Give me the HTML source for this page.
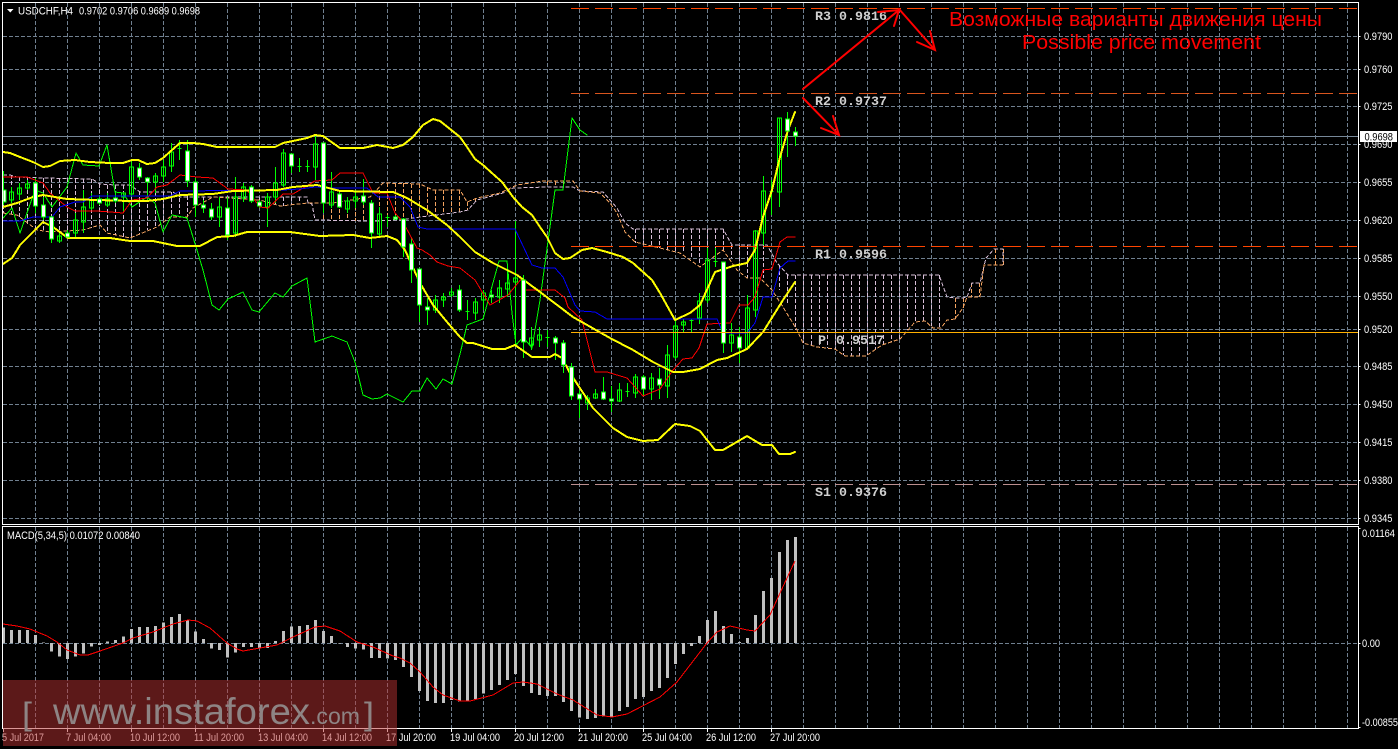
<!DOCTYPE html>
<html>
<head>
<meta charset="utf-8">
<style>
html,body{margin:0;padding:0;background:#000;width:1398px;height:749px;overflow:hidden}
svg{display:block;position:absolute;left:0;top:0}
text{font-family:"Liberation Sans",sans-serif}
.ax{font-size:11px;fill:#fff}
.lv{font-family:"Liberation Mono",monospace;font-size:13.33px;font-weight:bold;fill:#d0d0d0}
</style>
</head>
<body>
<svg width="1398" height="749" viewBox="0 0 1398 749" xmlns="http://www.w3.org/2000/svg">
<rect width="1398" height="749" fill="#000"/>

<!-- grid -->
<g stroke="#708090" stroke-width="1" stroke-dasharray="4 2" shape-rendering="crispEdges" fill="none">
<path d="M3 36.5H1358M3 69.5H1358M3 106.5H1358M3 144.5H1358M3 182.5H1358M3 220.5H1358M3 258.5H1358M3 296.5H1358M3 329.5H1358M3 366.5H1358M3 404.5H1358M3 442.5H1358M3 480.5H1358M3 518.5H1358M3 643.5H1358"/>
<path d="M35.5 3V524M67.5 3V524M99.5 3V524M131.5 3V524M163.5 3V524M195.5 3V524M227.5 3V524M259.5 3V524M291.5 3V524M323.5 3V524M355.5 3V524M387.5 3V524M419.5 3V524M451.5 3V524M483.5 3V524M515.5 3V524M547.5 3V524M579.5 3V524M611.5 3V524M643.5 3V524M675.5 3V524M707.5 3V524M739.5 3V524M771.5 3V524M803.5 3V524M835.5 3V524M867.5 3V524M899.5 3V524M931.5 3V524M963.5 3V524M995.5 3V524M1027.5 3V524M1059.5 3V524M1091.5 3V524M1123.5 3V524M1155.5 3V524M1187.5 3V524M1219.5 3V524M1251.5 3V524M1283.5 3V524M1315.5 3V524M1347.5 3V524"/>
<path d="M35.5 527V728M67.5 527V728M99.5 527V728M131.5 527V728M163.5 527V728M195.5 527V728M227.5 527V728M259.5 527V728M291.5 527V728M323.5 527V728M355.5 527V728M387.5 527V728M419.5 527V728M451.5 527V728M483.5 527V728M515.5 527V728M547.5 527V728M579.5 527V728M611.5 527V728M643.5 527V728M675.5 527V728M707.5 527V728M739.5 527V728M771.5 527V728M803.5 527V728M835.5 527V728M867.5 527V728M899.5 527V728M931.5 527V728M963.5 527V728M995.5 527V728M1027.5 527V728M1059.5 527V728M1091.5 527V728M1123.5 527V728M1155.5 527V728M1187.5 527V728M1219.5 527V728M1251.5 527V728M1283.5 527V728M1315.5 527V728M1347.5 527V728"/>
</g>

<!-- current price line -->
<path d="M3 136.5H1358" stroke="#778899" stroke-width="1" shape-rendering="crispEdges"/>

<!-- cloud hatches -->
<g fill="none" stroke-width="1" stroke-dasharray="4 2" shape-rendering="crispEdges">
<path stroke="#d8bfd8" d="M3.5 175V213M11.5 175V214M19.5 177V218M27.5 178V224M35.5 178V230M43.5 178V231M51.5 178V232M59.5 178V232M67.5 178V231M75.5 179V231M83.5 179V230M91.5 179V228M99.5 184V225M107.5 185V233M115.5 185V235M123.5 185V237M131.5 185V238M139.5 191V234M147.5 192V230M155.5 192V228M163.5 192V222M171.5 192V217M179.5 192V217M187.5 196V217M195.5 197V207M203.5 197V202M259.5 197V200M267.5 197V203M275.5 197V205M283.5 197V206M291.5 197V205M299.5 197V203M635.5 229V243M643.5 229V245M651.5 229V247M659.5 229V248M667.5 229V250M675.5 229V251M683.5 229V253M691.5 229V257M699.5 229V265M707.5 229V262M715.5 229V255M723.5 229V250M731.5 245V258M739.5 245V270M747.5 245V278M755.5 245V278M763.5 245V278M779.5 265V290M787.5 275V303M795.5 275V330M803.5 275V343M811.5 275V345M819.5 275V347M827.5 275V348M835.5 275V349M843.5 275V355M851.5 275V356M859.5 275V356M867.5 275V355M875.5 275V350M883.5 275V345M891.5 275V342M899.5 275V339M907.5 275V330M915.5 275V322M923.5 275V321M931.5 275V326M939.5 275V328"/>
<path stroke="#f4a460" d="M323.5 203V221M331.5 203V221M339.5 203V221M347.5 202V221M355.5 200V221M363.5 198V221M379.5 190V221M387.5 183V220M395.5 183V220M403.5 183V219M411.5 184V218M419.5 184V217M427.5 187V216M435.5 190V215M443.5 190V214M451.5 190V213M459.5 190V212M467.5 202V210M475.5 198V202M547.5 181V187M555.5 181V187M563.5 181V187M955.5 298V319M963.5 298V308M971.5 283V297M979.5 283V297M995.5 249V265M1003.5 249V265"/>
</g>

<!-- span B / span A -->
<g fill="none" stroke-width="1" stroke-dasharray="4 2" stroke-linejoin="round" shape-rendering="crispEdges">
<polyline stroke="#d8bfd8" points="3,175 10,175 17,177 43,178 92,179 100,184 115,185 130,185 140,192 173,192 180,197 217,197 307,197 308,203 312,204 315,220 372,221 400,220 420,217 460,212 468,210 477,200 503,193 513,188 547,187 573,187 580,191 603,192 617,208 625,223 633,229 723,229 732,245 767,245 777,263 788,275 939,275 947,297 955,298 963,298 967,297 972,283 980,283 986,258 994,249 1003,249 1003,265"/>
<polyline stroke="#f4a460" points="3,213 17,215 37,230 50,232 83,230 100,225 107,233 130,238 157,227 170,217 187,217 193,208 213,197 260,200 280,206 308,203 333,203 370,197 383,183 420,184 433,190 460,190 467,202 477,198 500,193 517,185 543,181 573,181 580,191 600,193 610,203 617,213 625,232 635,242 660,248 680,253 700,267 723,250 737,270 747,278 760,278 772,290 783,307 797,330 803,343 817,347 835,349 845,356 866,356 882,345 900,339 915,322 925,321 933,328 941,328 947,320 955,319 963,308 967,297 980,297 984,265 1003,265"/>
</g>

<!-- candles: wicks + bullish outlines -->
<path fill="none" stroke="#00ff00" stroke-width="1" shape-rendering="crispEdges" d="M3.5 171V205M11.5 187V203M19.5 183V200M27.5 180V190M35.5 178V213M43.5 197V220M51.5 216V243M59.5 233V243M67.5 230V238M75.5 213V237M83.5 190V233M91.5 193V210M99.5 195V205M107.5 193V207M115.5 192V203M123.5 192V213M131.5 160V197M139.5 163V180M147.5 177V200M155.5 173V193M163.5 160V182M171.5 143V172M179.5 140V160M187.5 140V187M195.5 178V217M203.5 200V213M211.5 203V220M219.5 197V227M227.5 197V240M235.5 177V237M243.5 183V202M251.5 185V203M259.5 200V208M267.5 193V227M275.5 167V203M283.5 149V187M291.5 153V173M299.5 158V172M307.5 160V172M315.5 135V180M323.5 143V213M331.5 172V208M339.5 190V208M347.5 197V213M355.5 190V208M363.5 179V205M371.5 200V248M379.5 207V237M387.5 215V227M395.5 215V220M403.5 218V257M411.5 237V283M419.5 269V322M427.5 298V325M435.5 295V313M443.5 293V307M451.5 288V297M459.5 285V312M467.5 300V320M475.5 298V320M483.5 290V310M491.5 290V303M499.5 280V303M507.5 270V297M515.5 221V345M523.5 275V358M531.5 327V350M539.5 327V347M547.5 330V347M555.5 336V360M563.5 340V373M571.5 363V400M579.5 390V418M587.5 395V410M595.5 389V399M603.5 377V400M611.5 386V412M619.5 383V402M627.5 383V397M635.5 374V398M643.5 375V396M651.5 373V400M659.5 368V399M667.5 345V398M675.5 320V359M683.5 319V332M691.5 319V332M699.5 293V324M707.5 248V303M715.5 248V267M723.5 262V353M731.5 323V352M739.5 327V363M747.5 295V350M755.5 230V317M763.5 176V245M771.5 180V215M779.5 118V207M787.5 112V157M795.5 127V146"/>
<path fill="none" stroke="#00ff00" stroke-width="1" shape-rendering="crispEdges" d="M9.5 192h4v8h-4zM17.5 188h4v6h-4zM25.5 184h4v4h-4zM57.5 236h4v5h-4zM73.5 220h4v13h-4zM81.5 207h4v15h-4zM89.5 200h4v8h-4zM105.5 199h4v6h-4zM121.5 193h4v4h-4zM129.5 167h4v27h-4zM153.5 176h4v6h-4zM161.5 167h4v9h-4zM169.5 152h4v14h-4zM217.5 207h4v10h-4zM233.5 197h4v36h-4zM241.5 187h4v11h-4zM265.5 197h4v10h-4zM273.5 183h4v14h-4zM281.5 153h4v32h-4zM313.5 144h4v23h-4zM329.5 192h4v13h-4zM345.5 201h4v8h-4zM353.5 197h4v4h-4zM377.5 214h4v20h-4zM433.5 300h4v10h-4zM441.5 297h4v3h-4zM449.5 292h4v3h-4zM473.5 302h4v11h-4zM481.5 293h4v7h-4zM497.5 288h4v9h-4zM505.5 283h4v6h-4zM513.5 278h4v4h-4zM529.5 338h4v7h-4zM537.5 335h4v5h-4zM585.5 398h4v5h-4zM593.5 394h4v4h-4zM617.5 390h4v11h-4zM633.5 377h4v16h-4zM649.5 378h4v11h-4zM665.5 355h4v31h-4zM673.5 326h4v31h-4zM681.5 322h4v3h-4zM697.5 301h4v17h-4zM705.5 260h4v40h-4zM729.5 335h4v8h-4zM745.5 308h4v40h-4zM753.5 231h4v79h-4zM761.5 191h4v42h-4zM777.5 118h4v74h-4zM177.5 148.5h4M297.5 166.5h4M305.5 166.5h4M385.5 217.5h4M465.5 311.5h4M545.5 337.5h4M625.5 391.5h4M689.5 320.5h4M713.5 261.5h4M769.5 191.5h4"/>

<!-- indicator lines -->
<g fill="none" stroke-linejoin="round" stroke-linecap="round" shape-rendering="crispEdges">
<polyline stroke="#00ff00" stroke-width="1" points="3,218 12,208 20,233 35,190 43,193 52,207 67,187 76,153 83,165 99,166 107,145 115,192 123,193 132,207 147,197 155,203 163,232 172,215 187,218 197,250 203,270 212,305 219,310 228,299 243,292 252,310 259,312 275,293 283,297 292,286 307,278 315,342 332,336 347,342 355,362 363,395 372,399 380,398 387,394 403,402 412,391 420,391 427,378 436,389 443,379 452,384 460,354 467,325 483,319 499,261 507,261 512,313 516,345 523,337 532,348 540,300 555,190 563,190 572,118 580,130 587,135"/>
<polyline stroke="#ff0000" stroke-width="1" points="3,177 27,177 43,183 50,193 67,207 75,211 97,211 123,213 132,200 147,198 157,187 167,185 180,175 197,177 213,178 228,189 247,190 260,207 268,208 283,194 293,194 315,181 332,180 340,173 363,173 373,193 387,193 395,213 403,222 417,248 422,250 430,255 437,262 448,266 460,268 475,280 490,305 508,295 522,278 523,290 555,290 565,298 568,307 582,320 595,372 607,372 627,378 643,396 660,389 673,370 683,359 692,358 699,348 707,324 730,323 739,305 748,305 755,297 763,270 772,269 780,242 787,237 795,237"/>
<polyline stroke="#0000ff" stroke-width="1" points="3,221 20,221 33,217 52,217 60,207 75,202 83,202 92,196 170,196 180,191 283,190 300,189 315,187 333,188 367,188 378,197 400,197 410,207 418,227 427,229 515,229 532,265 542,268 555,268 563,277 575,305 580,311 595,312 607,319 717,319 723,333 747,333 755,323 763,297 772,297 780,268 788,261 795,261"/>
<g stroke="#ffff00" stroke-width="2">
<polyline points="3,152 10,153 20,157 33,162 43,167 50,166 60,161 75,160 90,162 110,163 123,163 132,160 138,160 147,164 155,163 163,158 172,150 180,143 193,143 203,144 217,147 275,147 283,143 293,141 307,138 315,135 323,136 340,148 363,148 377,145 393,148 403,145 413,137 423,125 433,119 440,121 460,137 467,147 475,159 483,165 493,174 502,182 513,197 522,207 532,215 540,227 547,237 555,253 563,259 570,258 582,250 592,248 607,252 623,257 633,263 652,280 660,293 675,320 690,313 700,305 710,283 715,272 733,266 747,263 755,250 763,217 772,190 780,157 788,130 795,112"/>
<polyline points="3,207 17,203 33,197 43,195 67,199 97,200 130,201 147,201 163,199 180,195 213,194 233,191 277,190 293,187 317,185 340,191 393,192 407,198 427,210 447,225 460,237 475,252 493,263 517,275 540,292 573,317 610,338 633,350 653,362 673,372 683,372 700,369 717,360 727,358 747,349 763,332 783,300 795,282"/>
<polyline points="3,264 12,258 17,250 20,245 43,222 53,227 68,238 110,238 130,241 153,241 177,246 200,246 217,237 233,236 247,232 290,232 320,236 353,235 370,238 387,236 397,240 405,250 420,283 433,305 447,322 460,337 467,343 473,343 492,349 505,349 515,345 532,357 550,357 555,354 562,358 570,373 593,408 613,428 627,437 643,441 658,440 675,424 690,426 700,431 715,450 723,450 747,436 762,445 772,445 779,454 790,454 795,452"/>
</g>
</g>

<!-- bearish white bodies -->
<path fill="#fff" stroke="#00ff00" stroke-width="1" shape-rendering="crispEdges" d="M3 190h3v12h-3zM33.5 183h4v23h-4zM41.5 205h4v12h-4zM49.5 217h4v22h-4zM65.5 233h4v4h-4zM97.5 199h4v4h-4zM113.5 198h4v3h-4zM137.5 168h4v9h-4zM145.5 178h4v4h-4zM185.5 151h4v30h-4zM193.5 182h4v23h-4zM201.5 205h4v3h-4zM209.5 209h4v8h-4zM225.5 208h4v27h-4zM249.5 187h4v14h-4zM257.5 202h4v4h-4zM289.5 154h4v12h-4zM321.5 143h4v60h-4zM337.5 194h4v13h-4zM361.5 196h4v6h-4zM369.5 203h4v30h-4zM393.5 217h4v2h-4zM401.5 219h4v28h-4zM409.5 244h4v26h-4zM417.5 269h4v36h-4zM425.5 307h4v3h-4zM457.5 290h4v20h-4zM489.5 295h4v2h-4zM521.5 280h4v62h-4zM553.5 338h4v5h-4zM561.5 343h4v22h-4zM569.5 367h4v29h-4zM577.5 394h4v5h-4zM601.5 392h4v7h-4zM609.5 399h4v2h-4zM641.5 377h4v12h-4zM657.5 379h4v6h-4zM721.5 262h4v81h-4zM737.5 337h4v11h-4zM785.5 119h4v12h-4zM793.5 132h4v4h-4z"/>

<!-- pivot levels -->
<g fill="none" stroke-width="1" shape-rendering="crispEdges">
<path d="M571 8.5H1358" stroke="#ff4500" stroke-dasharray="18 6"/>
<path d="M571 93.5H1358" stroke="#d9551e" stroke-dasharray="18 6"/>
<path d="M571 246.5H1358" stroke="#ff4500" stroke-dasharray="18 6"/>
<path d="M571 332.5H1358" stroke="#ffb000"/>
<path d="M571 484.5H1358" stroke="#bc8f8f" stroke-dasharray="18 6"/>
</g>
<text class="lv" x="815" y="20" textLength="72" lengthAdjust="spacing">R3 0.9816</text>
<text class="lv" x="815" y="105" textLength="72" lengthAdjust="spacing">R2 0.9737</text>
<text class="lv" x="815" y="258" textLength="72" lengthAdjust="spacing">R1 0.9596</text>
<text class="lv" x="818" y="344">P</text>
<text class="lv" x="836" y="344" textLength="48" lengthAdjust="spacing">0.9517</text>
<text class="lv" x="815" y="496" textLength="72" lengthAdjust="spacing">S1 0.9376</text>

<!-- red arrows -->
<g fill="none" stroke="#ff0000" stroke-width="2" stroke-linecap="round" stroke-linejoin="miter">
<path d="M803 89L899 10M878 12L899 10L894 26"/>
<path d="M899 9L935 50M930 31L935 50L917 42"/>
<path d="M803 98L839 135M833 116L839 135L821 128"/>
</g>
<text x="949" y="26" font-size="20.5" fill="#ff0000" textLength="373" lengthAdjust="spacingAndGlyphs">Возможные варианты движения цены</text>
<text x="1022" y="49" font-size="20.5" fill="#ff0000" textLength="239" lengthAdjust="spacingAndGlyphs">Possible price movement</text>

<!-- MACD -->
<path fill="none" stroke="#c0c0c0" stroke-width="3" shape-rendering="crispEdges" d="M3.5 643V627.7M11.5 643V630M19.5 643V630M27.5 643V630M35.5 643V635M43.5 643V642.3M51.5 643V651.7M59.5 643V656.7M67.5 643V659M75.5 643V656.7M83.5 643V653.3M91.5 643V646.7M99.5 643V645M107.5 643V641.7M115.5 643V640M123.5 643V636.7M131.5 643V629M139.5 643V627M147.5 643V627M155.5 643V626M163.5 643V622.7M171.5 643V617M179.5 643V614M187.5 643V620M195.5 643V631.7M203.5 643V639M211.5 643V648.3M219.5 643V650M227.5 643V657.3M235.5 643V652.7M243.5 643V647M251.5 643V647M259.5 643V648.3M267.5 643V648M275.5 643V641M283.5 643V631M291.5 643V626.7M299.5 643V626M307.5 643V625M315.5 643V620M323.5 643V631M331.5 643V636M339.5 643V643.7M347.5 643V647M355.5 643V648.3M363.5 643V649.3M371.5 643V658M379.5 643V658M387.5 643V658.7M395.5 643V660M403.5 643V667M411.5 643V677M419.5 643V691M427.5 643V701M435.5 643V703M443.5 643V703M451.5 643V700M459.5 643V701.3M467.5 643V701.3M475.5 643V699M483.5 643V693.3M491.5 643V690M499.5 643V685M507.5 643V680M515.5 643V674M523.5 643V686M531.5 643V693M539.5 643V695M547.5 643V696M555.5 643V696M563.5 643V702M571.5 643V711M579.5 643V717.3M587.5 643V719M595.5 643V718M603.5 643V716.7M611.5 643V716.3M619.5 643V711M627.5 643V707M635.5 643V699M643.5 643V697M651.5 643V691M659.5 643V688M667.5 643V678M675.5 643V664M683.5 643V654M691.5 643V646M699.5 643V636M707.5 643V620M715.5 643V611M723.5 643V626M731.5 643V634M739.5 643V642M747.5 643V638M755.5 643V615M763.5 643V591M771.5 643V578M779.5 643V552M787.5 643V540M795.5 643V537"/>
<polyline fill="none" stroke="#ff0000" stroke-width="1" stroke-linejoin="round" shape-rendering="crispEdges" points="3,624 17,626 30,629 47,636 57,642 67,650 80,655 88,655 100,651 123,643 133,638 153,632 173,624 188,620 197,621 210,628 227,643 237,649 243,651 260,648 277,645 293,637 315,627 325,626 340,631 357,642 373,647 393,656 400,658 410,663 420,672 433,687 443,695 460,701 470,701 493,695 513,683 523,682 537,684 557,694 573,700 597,715 612,717 627,714 660,697 677,682 707,643 717,632 730,626 747,630 755,631 770,615 780,593 795,561"/>

<!-- frames -->
<g fill="none" stroke="#fff" stroke-width="1" shape-rendering="crispEdges">
<path d="M2.5 2.5H1358.5V524.5H2.5Z"/>
<path d="M2.5 526.5H1358.5V728.5H2.5Z"/>
<path d="M1358.5 36.5h2M1358.5 69.5h2M1358.5 106.5h2M1358.5 144.5h2M1358.5 182.5h2M1358.5 220.5h2M1358.5 258.5h2M1358.5 296.5h2M1358.5 329.5h2M1358.5 366.5h2M1358.5 404.5h2M1358.5 442.5h2M1358.5 480.5h2M1358.5 518.5h2M1358.5 528.5h2M1358.5 643.5h2M1358.5 727.5h2"/>
<path d="M3.5 729v3M67.5 729v3M131.5 729v3M195.5 729v3M259.5 729v3M323.5 729v3M387.5 729v3M451.5 729v3M515.5 729v3M579.5 729v3M643.5 729v3M707.5 729v3M771.5 729v3"/>
</g>

<!-- header -->
<path d="M7 9h6.5l-3.2 3.5z" fill="#fff"/>
<text x="18" y="14.5" font-size="11" fill="#fff" textLength="55" lengthAdjust="spacingAndGlyphs">USDCHF,H4</text>
<text x="79" y="14.5" font-size="11" fill="#fff" textLength="121" lengthAdjust="spacingAndGlyphs">0.9702 0.9706 0.9689 0.9698</text>
<text x="7" y="539" font-size="11" fill="#fff" textLength="133" lengthAdjust="spacingAndGlyphs">MACD(5,34,5) 0.01072 0.00840</text>

<!-- price axis -->
<g>
<text class="ax" x="1364" y="40" textLength="28.5" lengthAdjust="spacingAndGlyphs">0.9790</text>
<text class="ax" x="1364" y="73" textLength="28.5" lengthAdjust="spacingAndGlyphs">0.9760</text>
<text class="ax" x="1364" y="110" textLength="28.5" lengthAdjust="spacingAndGlyphs">0.9725</text>
<text class="ax" x="1364" y="148" textLength="28.5" lengthAdjust="spacingAndGlyphs">0.9690</text>
<text class="ax" x="1364" y="186" textLength="28.5" lengthAdjust="spacingAndGlyphs">0.9655</text>
<text class="ax" x="1364" y="224" textLength="28.5" lengthAdjust="spacingAndGlyphs">0.9620</text>
<text class="ax" x="1364" y="262" textLength="28.5" lengthAdjust="spacingAndGlyphs">0.9585</text>
<text class="ax" x="1364" y="300" textLength="28.5" lengthAdjust="spacingAndGlyphs">0.9550</text>
<text class="ax" x="1364" y="333" textLength="28.5" lengthAdjust="spacingAndGlyphs">0.9520</text>
<text class="ax" x="1364" y="370" textLength="28.5" lengthAdjust="spacingAndGlyphs">0.9485</text>
<text class="ax" x="1364" y="408" textLength="28.5" lengthAdjust="spacingAndGlyphs">0.9450</text>
<text class="ax" x="1364" y="446" textLength="28.5" lengthAdjust="spacingAndGlyphs">0.9415</text>
<text class="ax" x="1364" y="484" textLength="28.5" lengthAdjust="spacingAndGlyphs">0.9380</text>
<text class="ax" x="1364" y="522" textLength="28.5" lengthAdjust="spacingAndGlyphs">0.9345</text>
<text class="ax" x="1362" y="537" textLength="33" lengthAdjust="spacingAndGlyphs">0.01164</text>
<text class="ax" x="1362" y="647" textLength="18" lengthAdjust="spacingAndGlyphs">0.00</text>
<text class="ax" x="1362" y="726" textLength="36" lengthAdjust="spacingAndGlyphs">-0.00855</text>
</g>
<rect x="1360" y="131" width="37" height="11" fill="#fff"/>
<text x="1364.5" y="140.5" font-size="11" fill="#000" textLength="28.5" lengthAdjust="spacingAndGlyphs">0.9698</text>

<!-- date axis -->
<g>
<text class="ax" x="2" y="741" textLength="42" lengthAdjust="spacingAndGlyphs">5 Jul 2017</text>
<text class="ax" x="66" y="741" textLength="45" lengthAdjust="spacingAndGlyphs">7 Jul 04:00</text>
<text class="ax" x="130" y="741" textLength="50" lengthAdjust="spacingAndGlyphs">10 Jul 12:00</text>
<text class="ax" x="194" y="741" textLength="50" lengthAdjust="spacingAndGlyphs">11 Jul 20:00</text>
<text class="ax" x="258" y="741" textLength="50" lengthAdjust="spacingAndGlyphs">13 Jul 04:00</text>
<text class="ax" x="322" y="741" textLength="50" lengthAdjust="spacingAndGlyphs">14 Jul 12:00</text>
<text class="ax" x="386" y="741" textLength="50" lengthAdjust="spacingAndGlyphs">17 Jul 20:00</text>
<text class="ax" x="450" y="741" textLength="50" lengthAdjust="spacingAndGlyphs">19 Jul 04:00</text>
<text class="ax" x="514" y="741" textLength="50" lengthAdjust="spacingAndGlyphs">20 Jul 12:00</text>
<text class="ax" x="578" y="741" textLength="50" lengthAdjust="spacingAndGlyphs">21 Jul 20:00</text>
<text class="ax" x="642" y="741" textLength="50" lengthAdjust="spacingAndGlyphs">25 Jul 04:00</text>
<text class="ax" x="706" y="741" textLength="50" lengthAdjust="spacingAndGlyphs">26 Jul 12:00</text>
<text class="ax" x="770" y="741" textLength="50" lengthAdjust="spacingAndGlyphs">27 Jul 20:00</text>
</g>

<!-- watermark -->
<rect x="3" y="680" width="394" height="66" fill="#b83232" fill-opacity="0.5"/>
<g fill="#8e8484">
<text x="22" y="725" font-size="32" textLength="10" lengthAdjust="spacingAndGlyphs">[</text>
<text x="53" y="724" font-size="37" textLength="257" lengthAdjust="spacingAndGlyphs">www.instaforex</text>
<text x="310" y="724" font-size="23" textLength="50" lengthAdjust="spacingAndGlyphs">.com</text>
<text x="364" y="725" font-size="32" textLength="10" lengthAdjust="spacingAndGlyphs">]</text>
</g>
</svg>
</body>
</html>
